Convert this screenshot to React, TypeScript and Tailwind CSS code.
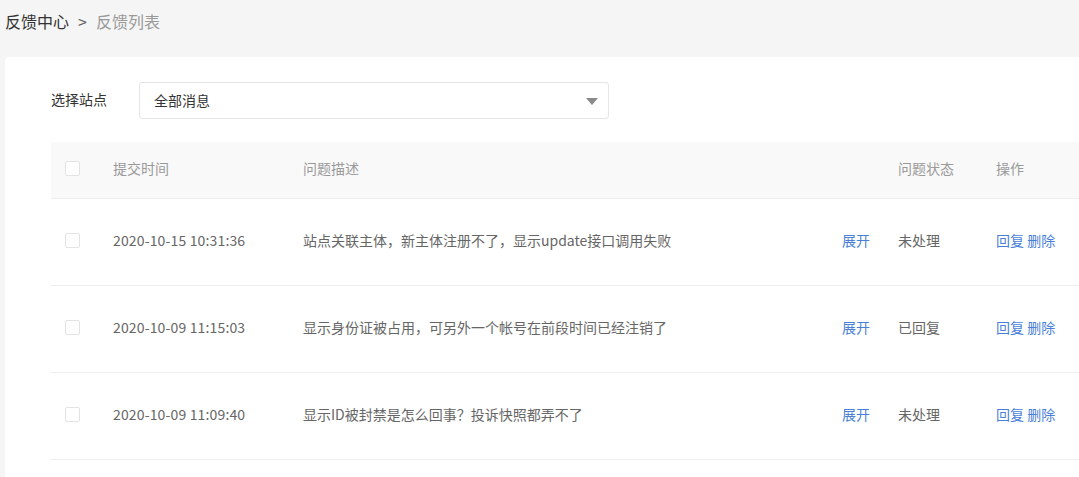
import React from "react";

const rows = [
  { time: "2020-10-15 10:31:36", desc: "站点关联主体，新主体注册不了，显示update接口调用失败", status: "未处理" },
  { time: "2020-10-09 11:15:03", desc: "显示身份证被占用，可另外一个帐号在前段时间已经注销了", status: "已回复" },
  { time: "2020-10-09 11:09:40", desc: "显示ID被封禁是怎么回事？投诉快照都弄不了", status: "未处理" },
];

const cols = "grid grid-cols-[62px_190px_539px_56px_98px_1fr] items-center";

function Box() {
  return <div className="ml-[14px] w-[15px] h-[15px] rounded-[2px] border border-[#e3e3e3] bg-white" />;
}

export default function App() {
  return (
    <div
      className="w-[1079px] h-[477px] overflow-hidden bg-[#f5f5f5] text-[14px]"
      style={{ fontFamily: '"Microsoft YaHei", "Noto Sans CJK SC", "Noto Sans", sans-serif' }}
    >
      <div className="h-[57px] pl-[5px] pt-[9px] flex items-start text-[16px] leading-[24px]">
        <span className="text-[#333]">反馈中心</span>
        <span className="text-[#666] mx-[9px]">&gt;</span>
        <span className="text-[#999]">反馈列表</span>
      </div>
      <div className="ml-[5px] w-[1120px] h-[440px] bg-white rounded-tl-[4px] pl-[46px] pt-[25px]">
        <div className="flex items-center h-[37px]">
          <span className="w-[88px] text-[#333] -mt-[2px]">选择站点</span>
          <div className="w-[470px] h-[37px] border border-[#e5e5e5] rounded-[3px] flex items-center justify-between pl-[14px] pr-[10px]">
            <span className="text-[#333]">全部消息</span>
            <svg width="12" height="7" viewBox="0 0 12 7" className="mt-[1px]">
              <path d="M0 0 L12 0 L6 7 Z" fill="#8a8a8a" />
            </svg>
          </div>
        </div>
        <div className="mt-[23px]">
          <div className={`${cols} h-[57px] pb-[3px] bg-[#f9f9f9] border-b border-[#eeeeee] text-[#999]`}>
            <Box />
            <span>提交时间</span>
            <span>问题描述</span>
            <span />
            <span>问题状态</span>
            <span>操作</span>
          </div>
          {rows.map((r, i) => (
            <div key={i} className={`${cols} h-[87px] pb-[3px] border-b border-[#eeeeee] text-[#666]`}>
              <Box />
              <span className="tracking-[0.15px]">{r.time}</span>
              <span>{r.desc}</span>
              <span className="text-[#4a7fd8]">展开</span>
              <span>{r.status}</span>
              <span className="text-[#4a7fd8]">回复 删除</span>
            </div>
          ))}
        </div>
      </div>
    </div>
  );
}
